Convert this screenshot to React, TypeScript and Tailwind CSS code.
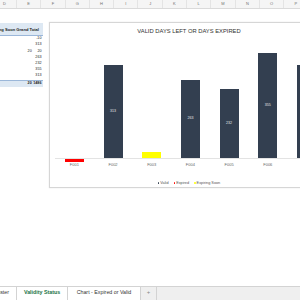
import React from "react";

const cols = [
  { l: "D", w: 17 },
  { l: "E", w: 24.3 },
  { l: "F", w: 24.3 },
  { l: "G", w: 24.3 },
  { l: "H", w: 24.3 },
  { l: "I", w: 24.3 },
  { l: "J", w: 24.3 },
  { l: "K", w: 24.3 },
  { l: "L", w: 24.3 },
  { l: "M", w: 24.3 },
  { l: "N", w: 24.3 },
  { l: "O", w: 24.3 },
  { l: "P", w: 24.3 },
];

const rows: [string, string][] = [
  ["", "-10"],
  ["", "313"],
  ["20", "20"],
  ["", "263"],
  ["", "232"],
  ["", "355"],
  ["", "313"],
];

const bars = [
  { c: "F001", v: -10, color: "#ff0000", label: false },
  { c: "F002", v: 313, color: "#333f50", label: true },
  { c: "F003", v: 20, color: "#ffff00", label: false },
  { c: "F004", v: 263, color: "#333f50", label: true },
  { c: "F005", v: 232, color: "#333f50", label: true },
  { c: "F006", v: 355, color: "#333f50", label: true },
  { c: "F007", v: 313, color: "#333f50", label: true },
];

const SCALE = 0.297;

export default function App() {
  return (
    <div
      className="w-[300px] h-[300px] overflow-hidden bg-white flex flex-col"
      style={{ fontFamily: '"Liberation Sans", Arial, sans-serif' }}
    >
      {/* column header */}
      <div className="h-[9px] shrink-0 flex bg-[#f5f5f5] border-b border-[#dadada]">
        {cols.map((c, i) => (
          <div
            key={c.l}
            className="shrink-0 h-full flex items-center justify-center text-[4px] text-[#707070] border-r border-[#e4e4e4]"
            style={{ width: c.w, justifyContent: i === 0 ? "flex-end" : "center", paddingRight: i === 0 ? 10 : 0 }}
          >
            {c.l}
          </div>
        ))}
      </div>

      {/* sheet area */}
      <div className="flex-1 flex items-start overflow-hidden">
        {/* pivot */}
        <div className="w-[43px] shrink-0 mt-[14px] text-[3.7px] text-[#222]">
          <div className="h-[13px] bg-[#dde8f3] border-b border-[#9bb7d9] flex items-end justify-end pr-[4px] pb-[1.5px] font-bold whitespace-nowrap overflow-hidden text-[4.1px]">
            <span>ng Soon Grand Total</span>
          </div>
          {rows.map((r, i) => (
            <div key={i} className="h-[6.2px] flex items-center leading-none">
              <div className="w-[31.7px] text-right">{r[0]}</div>
              <div className="w-[9.8px] text-right">{r[1]}</div>
            </div>
          ))}
          <div className="h-[6.5px] mt-[1px] flex items-center bg-[#dde8f3] border-t border-[#9bb7d9] font-bold leading-none">
            <div className="w-[31.7px] text-right">20</div>
            <div className="w-[9.8px] text-right">1486</div>
          </div>
        </div>

        {/* chart */}
        <div className="w-[280px] h-[166px] shrink-0 ml-[6px] mt-[13px] bg-white border border-[#d6d6d6] shadow-[0_0_1px_rgba(0,0,0,0.15)] flex flex-col">
          <div className="h-[18px] shrink-0 pt-[5px] text-center text-[5.8px] leading-[6px] text-[#333]">
            VALID DAYS LEFT OR DAYS EXPIRED
          </div>
          <div className="flex pl-[5px]">
            {bars.map((b) => {
              const h = Math.abs(b.v) * SCALE;
              return (
                <div key={b.c} className="w-[38.7px] shrink-0 flex flex-col items-center">
                  <div className="h-[118px] w-full flex items-end justify-center border-b border-[#e3e3e3]">
                    {b.v > 0 && (
                      <div
                        className="w-[19px] flex items-center justify-center text-[3.6px] text-[#e8e8e8]"
                        style={{ height: h, backgroundColor: b.color }}
                      >
                        {b.label ? b.v : null}
                      </div>
                    )}
                  </div>
                  <div className="h-[3px] w-full flex justify-center">
                    {b.v < 0 && (
                      <div className="w-[19px]" style={{ height: h, backgroundColor: b.color }} />
                    )}
                  </div>
                  <div className="h-[5px] leading-[5px] text-[4px] text-[#666]">{b.c}</div>
                </div>
              );
            })}
          </div>
          <div className="mt-[14px] h-[4px] flex justify-center items-center gap-[5px] text-[3.8px] leading-[4px] text-[#555]">
            <div className="flex items-center gap-[1px]">
              <span className="w-[1.6px] h-[1.6px] rounded-full bg-[#333f50]" />
              <span>Valid</span>
            </div>
            <div className="flex items-center gap-[1px]">
              <span className="w-[1.6px] h-[1.6px] rounded-full bg-[#ff0000]" />
              <span>Expired</span>
            </div>
            <div className="flex items-center gap-[1px]">
              <span className="w-[1.6px] h-[1.6px] rounded-full bg-[#ffff00]" />
              <span>Expiring Soon</span>
            </div>
          </div>
        </div>
      </div>

      {/* tabs */}
      <div className="h-[14px] shrink-0 flex bg-[#efefef] border-t border-[#d3d3d3] text-[5.3px] text-[#333]">
        <div className="w-[17px] shrink-0 flex items-center justify-end pr-[7px] bg-white border-r border-[#d3d3d3] pb-[2px] overflow-hidden whitespace-nowrap">
          <span>Master</span>
        </div>
        <div className="w-[51px] shrink-0 flex items-center justify-center bg-white text-[#217346] font-semibold pb-[2px] border-r border-[#d3d3d3]">
          Validity Status
        </div>
        <div className="w-[73px] shrink-0 flex items-center justify-center bg-white border-r border-[#d3d3d3] pb-[2px]">
          Chart - Expired or Valid
        </div>
        <div className="w-[16px] shrink-0 flex items-center justify-center text-[#888] border-r border-[#d3d3d3] pb-[2px] text-[6px]">
          +
        </div>
        <div className="flex-1" />
      </div>
    </div>
  );
}
